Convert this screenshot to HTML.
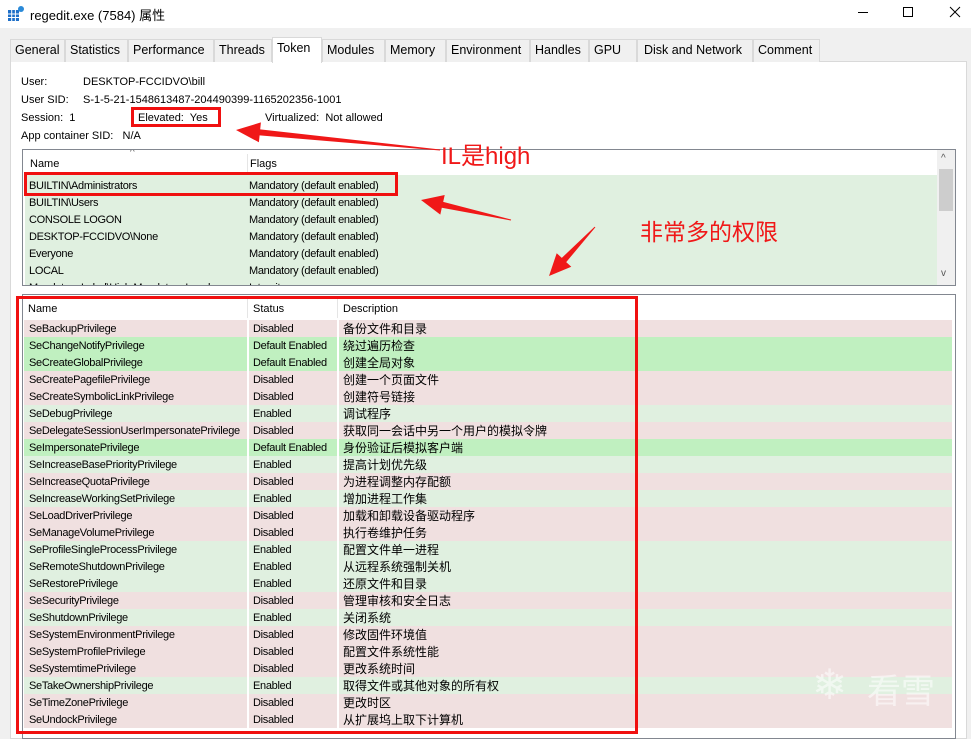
<!DOCTYPE html>
<html><head><meta charset="utf-8"><style>
*{margin:0;padding:0;box-sizing:border-box}
body{width:971px;height:739px;overflow:hidden;background:#f0f0f0;font-family:"Liberation Sans","Noto Sans CJK SC",sans-serif;font-size:11px;color:#000;position:relative}
.a{position:absolute;white-space:nowrap}
.tab{position:absolute;top:39px;height:23px;border:1px solid #d9d9d9;border-bottom:none;background:#f0f0f0;font-size:12.5px;padding:3px 0 0 4px;color:#000}
.row{position:absolute;left:24px;width:928px;height:17px;line-height:18px;letter-spacing:-0.3px}
.row span{position:absolute;top:0}
.row span:last-child{letter-spacing:0}
.D{background:#f0e0e0}.E{background:#e0f0e0}.G{background:#c0f0c0}
.red{position:absolute;border:3px solid #f01010}
</style></head><body>
<div class="a" style="left:0;top:0;width:971px;height:28px;background:#fff"></div>
<svg class="a" style="left:7px;top:5px" width="18" height="18"><rect x="1" y="5" width="11" height="11" fill="#1e6fc8"/><path d="M1 9h11M1 12.5h11M4.7 5v11M8.4 5v11" stroke="#fff" stroke-width="1"/><circle cx="14" cy="4" r="3" fill="#2a8ad8"/></svg>
<div class="a" style="left:30px;top:5px;font-size:13px">regedit.exe (7584) 属性</div>
<svg class="a" style="left:850px;top:0" width="121" height="28"><path d="M8 12.5h10" stroke="#000"/><rect x="53.5" y="7.5" width="9" height="9" fill="none" stroke="#000"/><path d="M100 7l10 10M110 7l-10 10" stroke="#000"/></svg>
<div class="a" style="left:10px;top:61px;width:957px;height:678px;background:#fff;border:1px solid #d9d9d9"></div>
<div class="tab" style="left:10px;width:55px">General</div>
<div class="tab" style="left:65px;width:63px">Statistics</div>
<div class="tab" style="left:128px;width:86px">Performance</div>
<div class="tab" style="left:214px;width:58px">Threads</div>
<div class="tab" style="left:272px;top:37px;height:26px;width:50px;background:#fff;padding-top:3px">Token</div>
<div class="tab" style="left:322px;width:63px">Modules</div>
<div class="tab" style="left:385px;width:61px">Memory</div>
<div class="tab" style="left:446px;width:84px">Environment</div>
<div class="tab" style="left:530px;width:59px">Handles</div>
<div class="tab" style="left:589px;width:48px">GPU</div>
<div class="tab" style="left:637px;width:116px;padding-left:6px">Disk and Network</div>
<div class="tab" style="left:753px;width:67px">Comment</div>

<div class="a" style="left:21px;top:76px">User:</div><div class="a" style="left:83px;top:76px">DESKTOP-FCCIDVO\bill</div>
<div class="a" style="left:21px;top:94px">User SID:</div><div class="a" style="left:83px;top:94px">S-1-5-21-1548613487-204490399-1165202356-1001</div>
<div class="a" style="left:21px;top:112px">Session:&nbsp; 1</div>
<div class="a" style="left:138px;top:112px">Elevated:&nbsp; Yes</div>
<div class="a" style="left:265px;top:112px">Virtualized:&nbsp; Not allowed</div>
<div class="a" style="left:21px;top:130px">App container SID:&nbsp;&nbsp; N/A</div>

<div class="a" style="left:22px;top:149px;width:934px;height:137px;border:1px solid #828790;background:#fff;overflow:hidden">
<div class="a" style="left:7px;top:8px">Name</div><div class="a" style="left:227px;top:8px">Flags</div>
<div class="a" style="left:224px;top:4px;width:1px;height:20px;background:#e5e5e5"></div>
<div class="a" style="left:107px;top:-3px;font-size:10px;color:#555">^</div>
<div class="a" style="left:2px;top:25px;width:912px;height:112px;background:#e0f0e0"></div>
<div class="a" style="left:6px;top:28px;line-height:17px;letter-spacing:-0.3px">BUILTIN\Administrators<br>BUILTIN\Users<br>CONSOLE LOGON<br>DESKTOP-FCCIDVO\None<br>Everyone<br>LOCAL<br>Mandatory Label\High Mandatory Level</div>
<div class="a" style="left:226px;top:28px;line-height:17px;letter-spacing:-0.3px">Mandatory (default enabled)<br>Mandatory (default enabled)<br>Mandatory (default enabled)<br>Mandatory (default enabled)<br>Mandatory (default enabled)<br>Mandatory (default enabled)<br>Integrity</div>
<div class="a" style="left:914px;top:0;width:19px;height:135px;background:#f0f0f0"></div>
<div class="a" style="left:916px;top:19px;width:14px;height:42px;background:#cdcdcd"></div>
<div class="a" style="left:918px;top:3px;font-size:10px;color:#555">^</div>
<div class="a" style="left:918px;top:118px;font-size:10px;color:#555">v</div>
</div>

<div class="a" style="left:22px;top:294px;width:934px;height:445px;border:1px solid #828790;background:#fff"></div>
<div class="a" style="left:28px;top:303px">Name</div><div class="a" style="left:253px;top:303px">Status</div><div class="a" style="left:343px;top:303px">Description</div>
<div class="a" style="left:247px;top:298px;width:1px;height:20px;background:#e5e5e5"></div>
<div class="a" style="left:337px;top:298px;width:1px;height:20px;background:#e5e5e5"></div>
<div class="row D" style="top:320px"><span style="left:5px">SeBackupPrivilege</span><span style="left:229px">Disabled</span><span style="left:319px;font-size:12px">备份文件和目录</span></div>
<div class="row G" style="top:337px"><span style="left:5px">SeChangeNotifyPrivilege</span><span style="left:229px">Default Enabled</span><span style="left:319px;font-size:12px">绕过遍历检查</span></div>
<div class="row G" style="top:354px"><span style="left:5px">SeCreateGlobalPrivilege</span><span style="left:229px">Default Enabled</span><span style="left:319px;font-size:12px">创建全局对象</span></div>
<div class="row D" style="top:371px"><span style="left:5px">SeCreatePagefilePrivilege</span><span style="left:229px">Disabled</span><span style="left:319px;font-size:12px">创建一个页面文件</span></div>
<div class="row D" style="top:388px"><span style="left:5px">SeCreateSymbolicLinkPrivilege</span><span style="left:229px">Disabled</span><span style="left:319px;font-size:12px">创建符号链接</span></div>
<div class="row E" style="top:405px"><span style="left:5px">SeDebugPrivilege</span><span style="left:229px">Enabled</span><span style="left:319px;font-size:12px">调试程序</span></div>
<div class="row D" style="top:422px"><span style="left:5px">SeDelegateSessionUserImpersonatePrivilege</span><span style="left:229px">Disabled</span><span style="left:319px;font-size:12px">获取同一会话中另一个用户的模拟令牌</span></div>
<div class="row G" style="top:439px"><span style="left:5px">SeImpersonatePrivilege</span><span style="left:229px">Default Enabled</span><span style="left:319px;font-size:12px">身份验证后模拟客户端</span></div>
<div class="row E" style="top:456px"><span style="left:5px">SeIncreaseBasePriorityPrivilege</span><span style="left:229px">Enabled</span><span style="left:319px;font-size:12px">提高计划优先级</span></div>
<div class="row D" style="top:473px"><span style="left:5px">SeIncreaseQuotaPrivilege</span><span style="left:229px">Disabled</span><span style="left:319px;font-size:12px">为进程调整内存配额</span></div>
<div class="row E" style="top:490px"><span style="left:5px">SeIncreaseWorkingSetPrivilege</span><span style="left:229px">Enabled</span><span style="left:319px;font-size:12px">增加进程工作集</span></div>
<div class="row D" style="top:507px"><span style="left:5px">SeLoadDriverPrivilege</span><span style="left:229px">Disabled</span><span style="left:319px;font-size:12px">加载和卸载设备驱动程序</span></div>
<div class="row D" style="top:524px"><span style="left:5px">SeManageVolumePrivilege</span><span style="left:229px">Disabled</span><span style="left:319px;font-size:12px">执行卷维护任务</span></div>
<div class="row E" style="top:541px"><span style="left:5px">SeProfileSingleProcessPrivilege</span><span style="left:229px">Enabled</span><span style="left:319px;font-size:12px">配置文件单一进程</span></div>
<div class="row E" style="top:558px"><span style="left:5px">SeRemoteShutdownPrivilege</span><span style="left:229px">Enabled</span><span style="left:319px;font-size:12px">从远程系统强制关机</span></div>
<div class="row E" style="top:575px"><span style="left:5px">SeRestorePrivilege</span><span style="left:229px">Enabled</span><span style="left:319px;font-size:12px">还原文件和目录</span></div>
<div class="row D" style="top:592px"><span style="left:5px">SeSecurityPrivilege</span><span style="left:229px">Disabled</span><span style="left:319px;font-size:12px">管理审核和安全日志</span></div>
<div class="row E" style="top:609px"><span style="left:5px">SeShutdownPrivilege</span><span style="left:229px">Enabled</span><span style="left:319px;font-size:12px">关闭系统</span></div>
<div class="row D" style="top:626px"><span style="left:5px">SeSystemEnvironmentPrivilege</span><span style="left:229px">Disabled</span><span style="left:319px;font-size:12px">修改固件环境值</span></div>
<div class="row D" style="top:643px"><span style="left:5px">SeSystemProfilePrivilege</span><span style="left:229px">Disabled</span><span style="left:319px;font-size:12px">配置文件系统性能</span></div>
<div class="row D" style="top:660px"><span style="left:5px">SeSystemtimePrivilege</span><span style="left:229px">Disabled</span><span style="left:319px;font-size:12px">更改系统时间</span></div>
<div class="row E" style="top:677px"><span style="left:5px">SeTakeOwnershipPrivilege</span><span style="left:229px">Enabled</span><span style="left:319px;font-size:12px">取得文件或其他对象的所有权</span></div>
<div class="row D" style="top:694px"><span style="left:5px">SeTimeZonePrivilege</span><span style="left:229px">Disabled</span><span style="left:319px;font-size:12px">更改时区</span></div>
<div class="row D" style="top:711px"><span style="left:5px">SeUndockPrivilege</span><span style="left:229px">Disabled</span><span style="left:319px;font-size:12px">从扩展坞上取下计算机</span></div>
<div class="a" style="left:247px;top:320px;width:2px;height:408px;background:#fff"></div>
<div class="a" style="left:337px;top:320px;width:2px;height:408px;background:#fff"></div>

<div class="a" style="left:867px;top:664px;font-size:34px;color:rgba(255,255,255,0.55)">看雪</div>
<div class="a" style="left:812px;top:660px;font-size:42px;color:rgba(255,255,255,0.55)">❄</div>

<div class="red" style="left:131px;top:107px;width:90px;height:20px"></div>
<div class="red" style="left:24px;top:172px;width:374px;height:24px"></div>
<div class="red" style="left:16px;top:296px;width:622px;height:438px"></div>

<svg class="a" style="left:0;top:0" width="971" height="739">
<g fill="#f01818">
<polygon points="440.05,149.5 439.95,150.5 259.6,135.4 258.9,142.3 236,130 260.9,122.4 260.2,129.4"/>
<polygon points="511.1,219.5 510.9,220.5 441.8,207.7 440.3,214.6 421,200 444.7,195 443.2,201.9"/>
<polygon points="595.4,227.3 594.6,226.7 561.8,257.9 556.7,253.2 549,276 571.3,266.8 566.2,262.1"/>
</g>
</svg>
<div class="a" style="left:441px;top:136px;font-size:24px;color:#f01818">IL是high</div>
<div class="a" style="left:640px;top:213px;font-size:23px;color:#f01818;font-family:'Noto Sans CJK SC',sans-serif">非常多的权限</div>
</body></html>
